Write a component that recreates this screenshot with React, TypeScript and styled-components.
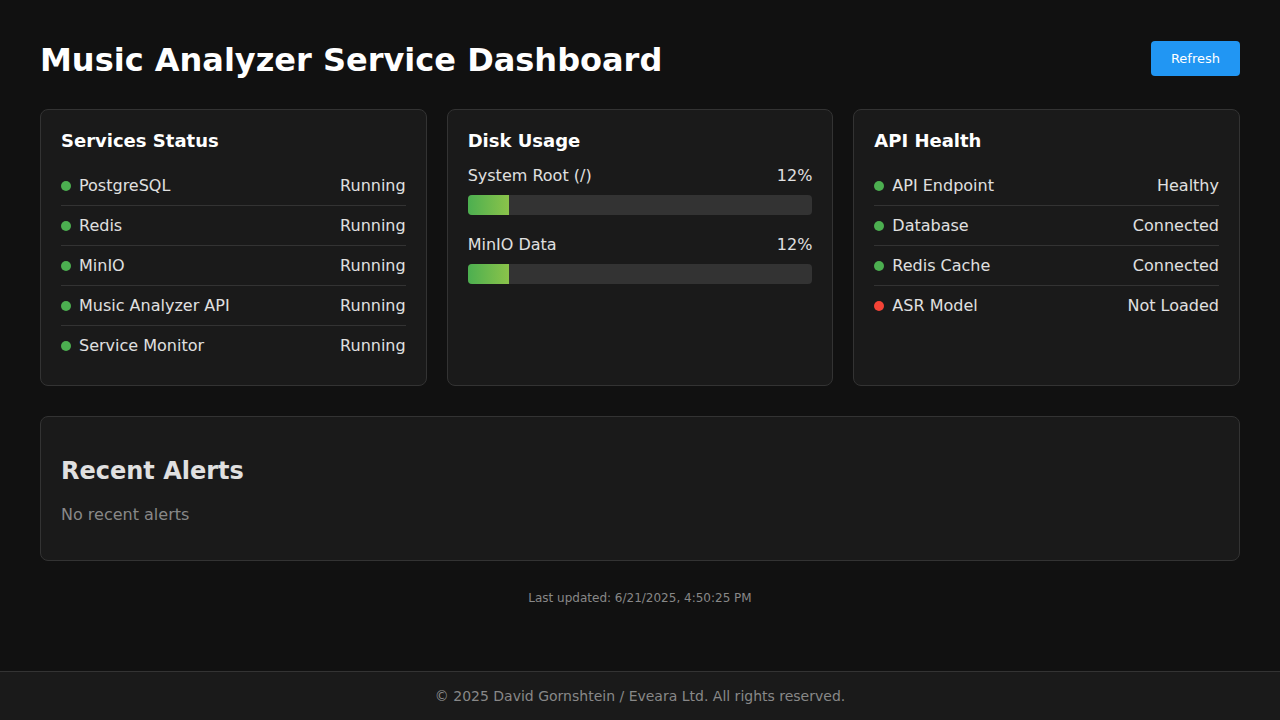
import React from "react";
import styled, { createGlobalStyle } from "styled-components";

const GlobalStyle = createGlobalStyle`
  html, body {
    margin: 0;
    padding: 0;
    background: #111111;
    color: #e0e0e0;
    font-family: "DejaVu Sans", "Liberation Sans", sans-serif;
  }
  * { box-sizing: border-box; }
`;

const Page = styled.div`
  min-height: 100vh;
  display: flex;
  flex-direction: column;
`;

const Main = styled.main`
  flex: 1;
  padding: 40px 40px 40px;
`;

const Header = styled.header`
  display: flex;
  align-items: center;
  justify-content: space-between;
  margin-bottom: 30px;
`;

const Title = styled.h1`
  margin: 1px 0 0;
  font-size: 32px;
  font-weight: bold;
  color: #ffffff;
`;

const RefreshButton = styled.button`
  background: #2196f3;
  color: #ffffff;
  border: none;
  border-radius: 4px;
  padding: 10px 20px;
  margin-bottom: 2px;
  font-family: "DejaVu Sans", sans-serif;
  font-size: 13px;
  line-height: 15px;
  cursor: pointer;
`;

const Grid = styled.div`
  display: grid;
  grid-template-columns: repeat(3, 1fr);
  gap: 20px;
  margin-bottom: 30px;
`;

const Card = styled.section`
  background: #1a1a1a;
  border: 1px solid #333333;
  border-radius: 8px;
  padding: 20px;
`;

const CardTitle = styled.h3`
  margin: 0 0 15px;
  font-size: 18px;
  font-weight: bold;
  color: #ffffff;
`;

const Row = styled.div`
  display: flex;
  align-items: center;
  justify-content: space-between;
  padding: 10px 0;
  font-size: 16px;
  border-bottom: 1px solid #333333;
  &:last-child {
    border-bottom: none;
  }
`;

const RowLabel = styled.span`
  display: flex;
  align-items: center;
`;

const Dot = styled.span<{ $ok: boolean }>`
  width: 10px;
  height: 10px;
  border-radius: 50%;
  margin-right: 8px;
  background: ${(p) => (p.$ok ? "#4caf50" : "#f44336")};
`;

const DiskItem = styled.div`
  margin-bottom: 20px;
  &:last-child {
    margin-bottom: 0;
  }
`;

const DiskHead = styled.div`
  display: flex;
  justify-content: space-between;
  font-size: 16px;
  margin-bottom: 10px;
`;

const Bar = styled.div`
  height: 20px;
  background: #333333;
  border-radius: 4px;
  overflow: hidden;
`;

const BarFill = styled.div`
  height: 100%;
  background: linear-gradient(90deg, #4caf50, #8bc34a);
`;

const AlertsCard = styled(Card)`
  padding: 20px;
`;

const AlertsTitle = styled.h2`
  font-size: 24px;
  font-weight: bold;
  color: #e0e0e0;
  margin: 20px 0;
`;

const Empty = styled.p`
  margin: 16px 0;
  font-size: 16px;
  color: #888888;
`;

const Updated = styled.div`
  margin-top: 30px;
  text-align: center;
  font-size: 12px;
  color: #888888;
`;

const Footer = styled.footer`
  background: #1a1a1a;
  border-top: 1px solid #333333;
  padding: 16px 0;
  text-align: center;
  font-size: 14px;
  color: #888888;
`;

const services = [
  "PostgreSQL",
  "Redis",
  "MinIO",
  "Music Analyzer API",
  "Service Monitor",
];

const disks = [
  { name: "System Root (/)", pct: 12 },
  { name: "MinIO Data", pct: 12 },
];

const health = [
  { name: "API Endpoint", status: "Healthy", ok: true },
  { name: "Database", status: "Connected", ok: true },
  { name: "Redis Cache", status: "Connected", ok: true },
  { name: "ASR Model", status: "Not Loaded", ok: false },
];

export default function App() {
  return (
    <Page>
      <GlobalStyle />
      <Main>
        <Header>
          <Title>Music Analyzer Service Dashboard</Title>
          <RefreshButton>Refresh</RefreshButton>
        </Header>
        <Grid>
          <Card>
            <CardTitle>Services Status</CardTitle>
            {services.map((s) => (
              <Row key={s}>
                <RowLabel>
                  <Dot $ok />
                  {s}
                </RowLabel>
                <span>Running</span>
              </Row>
            ))}
          </Card>
          <Card>
            <CardTitle>Disk Usage</CardTitle>
            {disks.map((d) => (
              <DiskItem key={d.name}>
                <DiskHead>
                  <span>{d.name}</span>
                  <span>{d.pct}%</span>
                </DiskHead>
                <Bar>
                  <BarFill style={{ width: `${d.pct}%` }} />
                </Bar>
              </DiskItem>
            ))}
          </Card>
          <Card>
            <CardTitle>API Health</CardTitle>
            {health.map((h) => (
              <Row key={h.name}>
                <RowLabel>
                  <Dot $ok={h.ok} />
                  {h.name}
                </RowLabel>
                <span>{h.status}</span>
              </Row>
            ))}
          </Card>
        </Grid>
        <AlertsCard>
          <AlertsTitle>Recent Alerts</AlertsTitle>
          <Empty>No recent alerts</Empty>
        </AlertsCard>
        <Updated>Last updated: 6/21/2025, 4:50:25 PM</Updated>
      </Main>
      <Footer>© 2025 David Gornshtein / Eveara Ltd. All rights reserved.</Footer>
    </Page>
  );
}
